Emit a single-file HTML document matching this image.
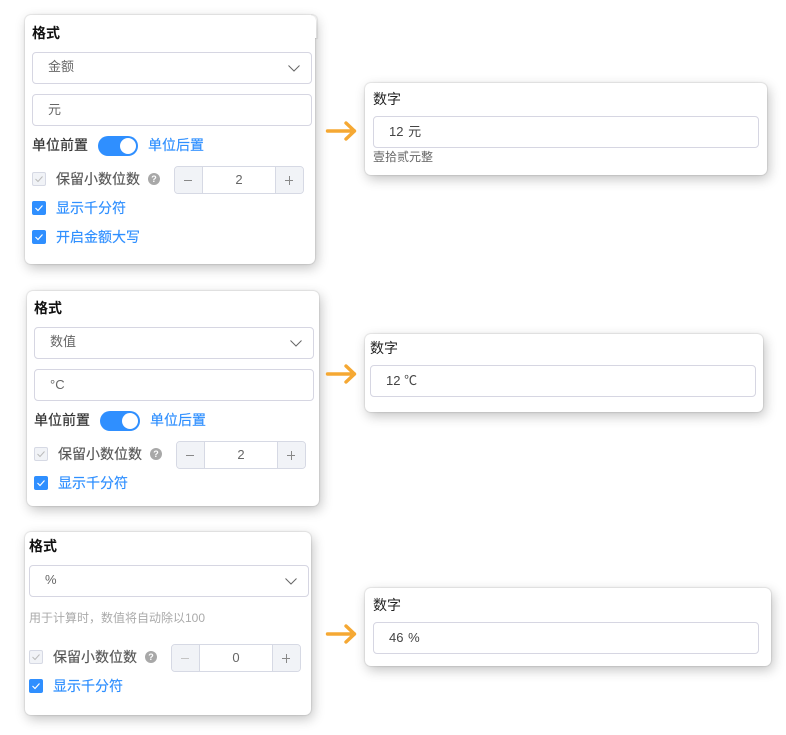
<!DOCTYPE html>
<html><head><meta charset="utf-8"><style>
html,body{margin:0;padding:0;background:#fff;width:786px;height:735px;overflow:hidden}
body{font-family:"Liberation Sans","Noto Sans CJK SC",sans-serif;font-size:14px;color:#333}
#w{left:0;top:0;width:786px;height:735px;filter:blur(.3px)}
div,svg{position:absolute;box-sizing:border-box}
.p{background:#fff;border-radius:6px;box-shadow:0 0 1px 1px rgba(0,0,0,.09),2px 4px 12px rgba(0,0,0,.24)}
.t{white-space:nowrap;line-height:20px;height:20px}
.b{font-weight:700;color:#111}
.f{border:1px solid #d6d6e2;border-radius:4px;background:#fff}
.g{color:#666}.d{color:#333;-webkit-text-stroke:.2px #333}
.bl{color:#2f8fff;-webkit-text-stroke:.15px #2f8fff}
.tg{width:40px;height:20px;border-radius:10px;background:#2f8fff}
.tg:after{content:"";position:absolute;right:2px;top:2px;width:16px;height:16px;border-radius:50%;background:#fff}
.c{width:14px;height:14px;border-radius:2px;background:#2f8fff}
.c0{width:14px;height:14px;border-radius:2px;background:#f1f3f7;border:1px solid #d6d9e4}
.h{width:12px;height:12px;border-radius:50%;background:#a8a8a8;color:#fff;font-size:9px;font-weight:700;line-height:12px;text-align:center}
.st{width:130px;height:28px;border:1px solid #d6d9e4;border-radius:4px;background:#fff;overflow:hidden}
.s1{left:0;top:0;width:28px;height:26px;background:#f1f3f7;border-right:1px solid #d6d9e4}
.s2{right:0;top:0;width:28px;height:26px;background:#f1f3f7;border-left:1px solid #d6d9e4}
.s1:after,.s2:after{content:"";position:absolute;left:9px;top:13px;width:8px;height:1px;background:#888}
.s2:before{content:"";position:absolute;left:13px;top:9px;width:1px;height:9px;background:#888}
.s2:after{left:9px}
.lt:after{background:#c4c4c4}
.s3{left:28px;right:28px;top:0;height:26px;text-align:center;line-height:26px;color:#666;font-size:13px}
.a{fill:none;stroke:#f5a833;stroke-width:3.4;stroke-linecap:round;stroke-linejoin:round}
</style></head><body><div id="w">

<!-- panel 1 -->
<div style="left:312px;top:15px;width:5px;height:23px;background:#fff;border-radius:0 6px 0 0;box-shadow:0 0 1px 1px rgba(0,0,0,.09)"></div>
<div class="p" style="left:25px;top:15px;width:290px;height:249px"></div>
<div style="left:300px;top:15px;width:16px;height:23px;background:#fff;border-radius:0 6px 0 0"></div>
<div class="t b" style="left:32px;top:23px">格式</div>
<div class="f" style="left:32px;top:52px;width:280px;height:32px"></div>
<div class="t g" style="left:48px;top:57px;font-size:13px">金额</div>
<svg style="left:288px;top:65px" width="12" height="7" viewBox="0 0 12 7"><path d="M.5 .5L6 6L11.5 .5" fill="none" stroke="#666" stroke-width="1"/></svg>
<div class="f" style="left:32px;top:94px;width:280px;height:32px"></div>
<div class="t g" style="left:48px;top:100px;font-size:13px">元</div>
<div class="t d" style="left:32px;top:135px">单位前置</div>
<div class="tg" style="left:98px;top:136px"></div>
<div class="t bl" style="left:148px;top:135px">单位后置</div>
<div class="c0" style="left:32px;top:172px"></div>
<svg style="left:32px;top:172px" width="14" height="14" viewBox="0 0 14 14"><path d="M3.5 7L6 9.5L10.5 4.5" fill="none" stroke="#bbb" stroke-width="1"/></svg>
<div class="t" style="left:56px;top:169px;color:#555;-webkit-text-stroke:.15px #555">保留小数位数</div>
<div class="h" style="left:148px;top:173px">?</div>
<div class="st" style="left:174px;top:166px"><div class="s1"></div><div class="s3">2</div><div class="s2"></div></div>
<div class="c" style="left:32px;top:201px"></div>
<svg style="left:32px;top:201px" width="14" height="14" viewBox="0 0 14 14"><path d="M3.5 7L6 9.5L10.5 4.5" fill="none" stroke="#fff" stroke-width="1.2"/></svg>
<div class="t bl" style="left:56px;top:198px">显示千分符</div>
<div class="c" style="left:32px;top:230px"></div>
<svg style="left:32px;top:230px" width="14" height="14" viewBox="0 0 14 14"><path d="M3.5 7L6 9.5L10.5 4.5" fill="none" stroke="#fff" stroke-width="1.2"/></svg>
<div class="t bl" style="left:56px;top:227px">开启金额大写</div>

<!-- panel 2 -->
<div class="p" style="left:27px;top:291px;width:292px;height:215px"></div>
<div class="t b" style="left:34px;top:298px">格式</div>
<div class="f" style="left:34px;top:327px;width:280px;height:32px"></div>
<div class="t g" style="left:50px;top:332px;font-size:13px">数值</div>
<svg style="left:290px;top:340px" width="12" height="7" viewBox="0 0 12 7"><path d="M.5 .5L6 6L11.5 .5" fill="none" stroke="#666" stroke-width="1"/></svg>
<div class="f" style="left:34px;top:369px;width:280px;height:32px"></div>
<div class="t g" style="left:50px;top:375px;font-size:13px">°C</div>
<div class="t d" style="left:34px;top:410px">单位前置</div>
<div class="tg" style="left:100px;top:411px"></div>
<div class="t bl" style="left:150px;top:410px">单位后置</div>
<div class="c0" style="left:34px;top:447px"></div>
<svg style="left:34px;top:447px" width="14" height="14" viewBox="0 0 14 14"><path d="M3.5 7L6 9.5L10.5 4.5" fill="none" stroke="#bbb" stroke-width="1"/></svg>
<div class="t" style="left:58px;top:444px;color:#555;-webkit-text-stroke:.15px #555">保留小数位数</div>
<div class="h" style="left:150px;top:448px">?</div>
<div class="st" style="left:176px;top:441px"><div class="s1"></div><div class="s3">2</div><div class="s2"></div></div>
<div class="c" style="left:34px;top:476px"></div>
<svg style="left:34px;top:476px" width="14" height="14" viewBox="0 0 14 14"><path d="M3.5 7L6 9.5L10.5 4.5" fill="none" stroke="#fff" stroke-width="1.2"/></svg>
<div class="t bl" style="left:58px;top:473px">显示千分符</div>

<!-- panel 3 -->
<div class="p" style="left:25px;top:532px;width:286px;height:183px"></div>
<div class="t b" style="left:29px;top:536px">格式</div>
<div class="f" style="left:29px;top:565px;width:280px;height:32px"></div>
<div class="t g" style="left:45px;top:570px;font-size:13px">%</div>
<svg style="left:285px;top:578px" width="12" height="7" viewBox="0 0 12 7"><path d="M.5 .5L6 6L11.5 .5" fill="none" stroke="#666" stroke-width="1"/></svg>
<div class="t" style="left:29px;top:608px;font-size:12px;color:#aaa">用于计算时，数值将自动除以100</div>
<div class="c0" style="left:29px;top:650px"></div>
<svg style="left:29px;top:650px" width="14" height="14" viewBox="0 0 14 14"><path d="M3.5 7L6 9.5L10.5 4.5" fill="none" stroke="#bbb" stroke-width="1"/></svg>
<div class="t" style="left:53px;top:647px;color:#555;-webkit-text-stroke:.15px #555">保留小数位数</div>
<div class="h" style="left:145px;top:651px">?</div>
<div class="st" style="left:171px;top:644px"><div class="s1 lt"></div><div class="s3">0</div><div class="s2"></div></div>
<div class="c" style="left:29px;top:679px"></div>
<svg style="left:29px;top:679px" width="14" height="14" viewBox="0 0 14 14"><path d="M3.5 7L6 9.5L10.5 4.5" fill="none" stroke="#fff" stroke-width="1.2"/></svg>
<div class="t bl" style="left:53px;top:676px">显示千分符</div>

<!-- right 1 -->
<div class="p" style="left:365px;top:83px;width:402px;height:92px"></div>
<div class="t" style="left:373px;top:89px;color:#222">数字</div>
<div class="f" style="left:373px;top:116px;width:386px;height:32px"></div>
<div class="t" style="left:389px;top:122px;font-size:13px;color:#444;word-spacing:1px">12 元</div>
<div class="t" style="left:373px;top:147px;font-size:12px;color:#666">壹拾贰元整</div>
<svg style="left:325px;top:120px" width="33" height="22" viewBox="0 0 33 22"><path class="a" d="M2.5 11H29.5M21 3L29.5 11L21 19"/></svg>

<!-- right 2 -->
<div class="p" style="left:365px;top:334px;width:398px;height:78px"></div>
<div class="t" style="left:370px;top:338px;color:#222">数字</div>
<div class="f" style="left:370px;top:365px;width:386px;height:32px"></div>
<div class="t" style="left:386px;top:371px;font-size:13px;color:#444">12 ℃</div>
<svg style="left:325px;top:363px" width="33" height="22" viewBox="0 0 33 22"><path class="a" d="M2.5 11H29.5M21 3L29.5 11L21 19"/></svg>

<!-- right 3 -->
<div class="p" style="left:365px;top:588px;width:406px;height:78px"></div>
<div class="t" style="left:373px;top:595px;color:#222">数字</div>
<div class="f" style="left:373px;top:622px;width:386px;height:32px"></div>
<div class="t" style="left:389px;top:628px;font-size:13px;color:#444;word-spacing:1px">46 %</div>
<svg style="left:325px;top:623px" width="33" height="22" viewBox="0 0 33 22"><path class="a" d="M2.5 11H29.5M21 3L29.5 11L21 19"/></svg>

</div></body></html>
